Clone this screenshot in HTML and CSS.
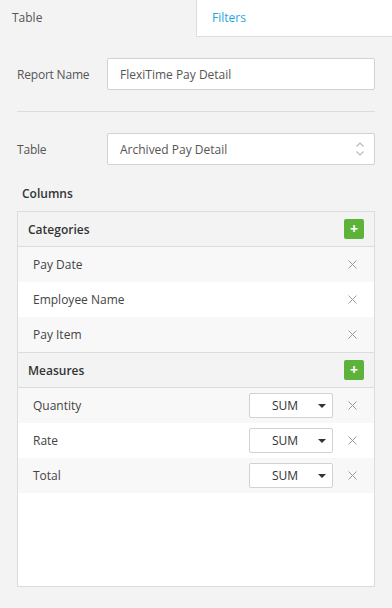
FILE: index.html
```html
<!DOCTYPE html>
<html lang="en">
<head>
    <meta charset="UTF-8">
    <title>Report Builder</title>
    <link rel="stylesheet" href="styles.css">
</head>
<body>
    <div class="tabs">
        <div class="tab active">Table</div>
        <div class="tab filters">Filters</div>
    </div>
    <div class="content">
        <div class="field">
            <label for="reportname">Report Name</label>
            <input type="text" id="reportname" value="FlexiTime Pay Detail">
        </div>
        <hr class="divider">
        <div class="field">
            <label>Table</label>
            <div class="select">
                <span>Archived Pay Detail</span>
                <svg width="10" height="16" viewBox="0 0 10 16"><path d="M1.5 5.5 L5 2 L8.5 5.5 M1.5 10.5 L5 14 L8.5 10.5" fill="none" stroke="#bbb" stroke-width="1.2"/></svg>
            </div>
        </div>
        <div class="section-title">Columns</div>
        <div class="panel">
            <div class="panel-head">
                <span>Categories</span>
                <button class="add">+</button>
            </div>
            <div class="row"><span>Pay Date</span><svg class="remove" width="9" height="9" viewBox="0 0 9 9"><path d="M0.5 0.5 L8.5 8.5 M8.5 0.5 L0.5 8.5" stroke="#9a9a9a" stroke-width="1"/></svg></div>
            <div class="row"><span>Employee Name</span><svg class="remove" width="9" height="9" viewBox="0 0 9 9"><path d="M0.5 0.5 L8.5 8.5 M8.5 0.5 L0.5 8.5" stroke="#9a9a9a" stroke-width="1"/></svg></div>
            <div class="row"><span>Pay Item</span><svg class="remove" width="9" height="9" viewBox="0 0 9 9"><path d="M0.5 0.5 L8.5 8.5 M8.5 0.5 L0.5 8.5" stroke="#9a9a9a" stroke-width="1"/></svg></div>
            <div class="panel-head">
                <span>Measures</span>
                <button class="add">+</button>
            </div>
            <div class="row"><span>Quantity</span><div class="agg">SUM<i class="caret"></i></div><svg class="remove" width="9" height="9" viewBox="0 0 9 9"><path d="M0.5 0.5 L8.5 8.5 M8.5 0.5 L0.5 8.5" stroke="#9a9a9a" stroke-width="1"/></svg></div>
            <div class="row"><span>Rate</span><div class="agg">SUM<i class="caret"></i></div><svg class="remove" width="9" height="9" viewBox="0 0 9 9"><path d="M0.5 0.5 L8.5 8.5 M8.5 0.5 L0.5 8.5" stroke="#9a9a9a" stroke-width="1"/></svg></div>
            <div class="row"><span>Total</span><div class="agg">SUM<i class="caret"></i></div><svg class="remove" width="9" height="9" viewBox="0 0 9 9"><path d="M0.5 0.5 L8.5 8.5 M8.5 0.5 L0.5 8.5" stroke="#9a9a9a" stroke-width="1"/></svg></div>
        </div>
    </div>
</body>
</html>
```

FILE: styles.css
```css
body { margin: 0; background: #f3f3f3; font-family: "Open Sans", Arial, sans-serif; font-size: 12px; color: #555; }
.tabs { display: flex; height: 37px; }
.tab { width: 50%; box-sizing: border-box; padding: 0 12px; line-height: 36px; font-size: 12px; color: #555; }
.tab.filters { background: #fff; color: #1fa7e1; border-left: 1px solid #ddd; border-bottom: 1px solid #ddd; padding-left: 15px; }
.content { padding: 21px 17px 0 17px; }
.field { display: flex; align-items: center; }
.field label { width: 90px; flex: none; color: #555; letter-spacing: -0.2px; }
.field input { flex: 1; height: 32px; box-sizing: border-box; border: 1px solid #d2d2d2; border-radius: 2px; padding: 0 12px; font: inherit; color: #555; background: #fff; }
.divider { border: none; border-top: 1px solid #dcdcdc; margin: 21px 0 21px 0; }
.select { flex: 1; height: 32px; box-sizing: border-box; border: 1px solid #d2d2d2; border-radius: 2px; padding: 0 9px 0 12px; background: #fff; display: flex; align-items: center; justify-content: space-between; }
.section-title { font-weight: 600; color: #333; margin: 20px 0 9px 5px; }
.panel { border: 1px solid #dcdcdc; background: #fff; height: 376px; box-sizing: border-box; }
.panel-head { display: flex; align-items: center; justify-content: space-between; height: 34px; padding: 0 10px 0 10px; background: #f3f3f3; border-bottom: 1px solid #dcdcdc; font-weight: 600; color: #333; }
.row + .panel-head { border-top: 1px solid #dcdcdc; }
.add { width: 20px; height: 20px; padding: 0; border: none; border-radius: 2px; background: #5db23a; color: #fff; font: bold 14px/20px "Open Sans", Arial, sans-serif; }
.row { display: flex; align-items: center; height: 35px; padding: 0 17px 0 15px; background: #f8f8f8; font-size: 12px; color: #444; }
.row:nth-child(odd) { background: #fff; }
.row span:first-child { flex: 1; }
.remove { flex: none; }
.agg { position: relative; width: 84px; height: 25px; box-sizing: border-box; border: 1px solid #d2d2d2; border-radius: 2px; background: #fff; margin-right: 15px; text-align: center; line-height: 23px; padding-right: 12px; font-size: 12px; color: #333; }
.caret { position: absolute; right: 6px; top: 10px; border-left: 4px solid transparent; border-right: 4px solid transparent; border-top: 4px solid #333; }
```
